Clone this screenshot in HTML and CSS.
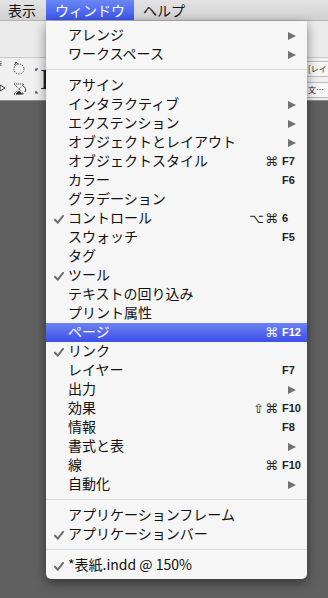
FILE: index.html
```html
<!DOCTYPE html>
<html lang="ja">
<head>
<meta charset="utf-8">
<link rel="stylesheet" href="styles.css">
</head>
<body>
<div class="screen">
  <div class="menubar">
    <div class="mb-item first">表示</div>
    <div class="mb-item active">ウィンドウ</div>
    <div class="mb-item">ヘルプ</div>
  </div>
  <div class="toolbar-top"></div>
  <div class="toolbar">
    <div class="tools-left">
      <svg class="tool-icons" width="50" height="42" viewBox="0 0 50 42">
        <g fill="none" stroke="#333" stroke-width="1">
          <path d="M-2 6 l3 0 M1 3 l0 6" stroke-dasharray="1 1"/>
          <circle cx="19" cy="11" r="5" stroke-dasharray="1.2 1.2"/>
          <path d="M14.5 7 l1.5 -3 l2 2.5" />
          <path d="M0 27 l5 3 l-5 3 z"/>
          <path d="M14 26 l10 0 l-5 5 z M14 36 l10 0 l-5 -5 z" stroke-dasharray="1 1"/>
          <path d="M16 36 l6 0 l-3 -3 z" fill="#333"/>
          <path d="M23 28 a4 4 0 0 1 2 6" />
          <path d="M36 13 l0 -2 l2 0 M36 33 l0 2 l2 0" stroke-width="1.2"/>
        </g>
        <text x="40" y="31" class="cursor-i">I</text>
      </svg>
    </div>
    <div class="tools-right">
      <div class="field">[レイ</div>
      <div class="field second">文…</div>
    </div>
  </div>
  <div class="canvas"></div>

  <div class="menu">
    <div class="row"><span class="chk"></span><span class="lbl">アレンジ</span><span class="mod"></span><span class="key"><i class="arrow"></i></span></div>
    <div class="row"><span class="chk"></span><span class="lbl">ワークスペース</span><span class="mod"></span><span class="key"><i class="arrow"></i></span></div>
    <div class="sep"></div>
    <div class="row"><span class="chk"></span><span class="lbl">アサイン</span><span class="mod"></span><span class="key"></span></div>
    <div class="row"><span class="chk"></span><span class="lbl">インタラクティブ</span><span class="mod"></span><span class="key"><i class="arrow"></i></span></div>
    <div class="row"><span class="chk"></span><span class="lbl">エクステンション</span><span class="mod"></span><span class="key"><i class="arrow"></i></span></div>
    <div class="row"><span class="chk"></span><span class="lbl">オブジェクトとレイアウト</span><span class="mod"></span><span class="key"><i class="arrow"></i></span></div>
    <div class="row"><span class="chk"></span><span class="lbl">オブジェクトスタイル</span><span class="mod">⌘</span><span class="key">F7</span></div>
    <div class="row"><span class="chk"></span><span class="lbl">カラー</span><span class="mod"></span><span class="key">F6</span></div>
    <div class="row"><span class="chk"></span><span class="lbl">グラデーション</span><span class="mod"></span><span class="key"></span></div>
    <div class="row"><span class="chk"><svg width="10" height="9" viewBox="0 0 10 9"><path d="M1 4.8 L3.8 7.6 L9 1" /></svg></span><span class="lbl">コントロール</span><span class="mod">⌥⌘</span><span class="key">6</span></div>
    <div class="row"><span class="chk"></span><span class="lbl">スウォッチ</span><span class="mod"></span><span class="key">F5</span></div>
    <div class="row"><span class="chk"></span><span class="lbl">タグ</span><span class="mod"></span><span class="key"></span></div>
    <div class="row"><span class="chk"><svg width="10" height="9" viewBox="0 0 10 9"><path d="M1 4.8 L3.8 7.6 L9 1" /></svg></span><span class="lbl">ツール</span><span class="mod"></span><span class="key"></span></div>
    <div class="row"><span class="chk"></span><span class="lbl">テキストの回り込み</span><span class="mod"></span><span class="key"></span></div>
    <div class="row"><span class="chk"></span><span class="lbl">プリント属性</span><span class="mod"></span><span class="key"></span></div>
    <div class="row selected"><span class="chk"></span><span class="lbl">ページ</span><span class="mod">⌘</span><span class="key">F12</span></div>
    <div class="row"><span class="chk"><svg width="10" height="9" viewBox="0 0 10 9"><path d="M1 4.8 L3.8 7.6 L9 1" /></svg></span><span class="lbl">リンク</span><span class="mod"></span><span class="key"></span></div>
    <div class="row"><span class="chk"></span><span class="lbl">レイヤー</span><span class="mod"></span><span class="key">F7</span></div>
    <div class="row"><span class="chk"></span><span class="lbl">出力</span><span class="mod"></span><span class="key"><i class="arrow"></i></span></div>
    <div class="row"><span class="chk"></span><span class="lbl">効果</span><span class="mod">⇧⌘</span><span class="key">F10</span></div>
    <div class="row"><span class="chk"></span><span class="lbl">情報</span><span class="mod"></span><span class="key">F8</span></div>
    <div class="row"><span class="chk"></span><span class="lbl">書式と表</span><span class="mod"></span><span class="key"><i class="arrow"></i></span></div>
    <div class="row"><span class="chk"></span><span class="lbl">線</span><span class="mod">⌘</span><span class="key">F10</span></div>
    <div class="row"><span class="chk"></span><span class="lbl">自動化</span><span class="mod"></span><span class="key"><i class="arrow"></i></span></div>
    <div class="sep"></div>
    <div class="row"><span class="chk"></span><span class="lbl">アプリケーションフレーム</span><span class="mod"></span><span class="key"></span></div>
    <div class="row"><span class="chk"><svg width="10" height="9" viewBox="0 0 10 9"><path d="M1 4.8 L3.8 7.6 L9 1" /></svg></span><span class="lbl">アプリケーションバー</span><span class="mod"></span><span class="key"></span></div>
    <div class="sep"></div>
    <div class="row"><span class="chk"><svg width="10" height="9" viewBox="0 0 10 9"><path d="M1 4.8 L3.8 7.6 L9 1" /></svg></span><span class="lbl">*表紙.indd @ 150%</span><span class="mod"></span><span class="key"></span></div>
  </div>
</div>
</body>
</html>
```

FILE: styles.css
```css
html, body {
  margin: 0;
  padding: 0;
}
body {
  width: 328px;
  height: 598px;
  overflow: hidden;
  background: #606060;
  font-family: "Noto Sans CJK JP", "Noto Sans", sans-serif;
  color: #111;
}
.screen {
  position: relative;
  width: 328px;
  height: 598px;
  display: flex;
  flex-direction: column;
}
.menubar {
  height: 21px;
  flex: none;
  display: flex;
  background: linear-gradient(#e4e4e4, #d0d0d0);
  box-sizing: border-box;
  border-bottom: 1px solid #b4b4b4;
  font-size: 14px;
  line-height: 20px;
}
.mb-item {
  padding: 0 9px;
  color: #111;
}
.mb-item.first {
  padding: 0 10px 0 8px;
}
.mb-item.active {
  color: #fff;
  background: linear-gradient(#6a86f6, #3a56ec);
}
.toolbar-top {
  height: 36px;
  flex: none;
  background: #ebebeb;
  border-bottom: 1px solid #c9c9c9;
}
.toolbar {
  height: 42px;
  flex: none;
  display: flex;
  justify-content: space-between;
  background: #f0f0f0;
  border-bottom: 1px solid #8a8a8a;
}
.tools-left {
  display: flex;
}
.tool-icons {
  display: block;
}
.cursor-i {
  font-family: "Liberation Serif", serif;
  font-size: 30px;
  fill: #222;
}
.tools-right {
  width: 21px;
  display: flex;
  flex-direction: column;
  gap: 5px;
  padding-top: 3px;
  overflow: hidden;
}
.field {
  font-size: 8px;
  line-height: 14px;
  height: 14px;
  white-space: nowrap;
  padding-left: 1px;
  border-top: 1px solid #bdbdbd;
  border-bottom: 1px solid #bdbdbd;
  background: #f7f7f7;
  color: #222;
}
.canvas {
  flex: 1;
  background: #606060;
}
.menu {
  position: absolute;
  left: 46px;
  top: 21px;
  width: 261px;
  padding: 5px 0 4px;
  background: #f6f6f6;
  border-radius: 0 0 5px 5px;
  box-shadow: 0 4px 12px rgba(0, 0, 0, 0.45), 0 0 1px rgba(0, 0, 0, 0.3);
}
.row {
  display: grid;
  grid-template-columns: 22px 1fr auto 25px;
  height: 19px;
  align-items: center;
  font-size: 14px;
  line-height: 19px;
}
.lbl {
  white-space: nowrap;
  position: relative;
  top: -1px;
}
.chk {
  display: flex;
  justify-content: flex-end;
  padding-right: 4px;
  padding-top: 1px;
}
.chk svg path {
  fill: none;
  stroke: #6c6c6c;
  stroke-width: 2;
  stroke-linecap: square;
}
.mod {
  font-family: "DejaVu Sans", sans-serif;
  font-size: 13px;
  text-align: right;
  padding-right: 3px;
  color: #222;
  letter-spacing: 1px;
}
.key {
  font-family: "Liberation Sans", sans-serif;
  font-weight: bold;
  font-size: 11px;
  color: #222;
  display: flex;
  align-items: center;
}
.arrow {
  display: block;
  margin-left: 6px;
  width: 0;
  height: 0;
  border-top: 4.5px solid transparent;
  border-bottom: 4.5px solid transparent;
  border-left: 8px solid #717171;
}
.row.selected {
  background: linear-gradient(#6d82f3, #3c4fe7);
  color: #fff;
}
.row.selected .mod,
.row.selected .key {
  color: #fff;
}
.sep {
  height: 12px;
  box-sizing: border-box;
  border-top: 5px solid transparent;
}
.sep::before {
  content: "";
  display: block;
  height: 1px;
  background: #dadada;
}
```
